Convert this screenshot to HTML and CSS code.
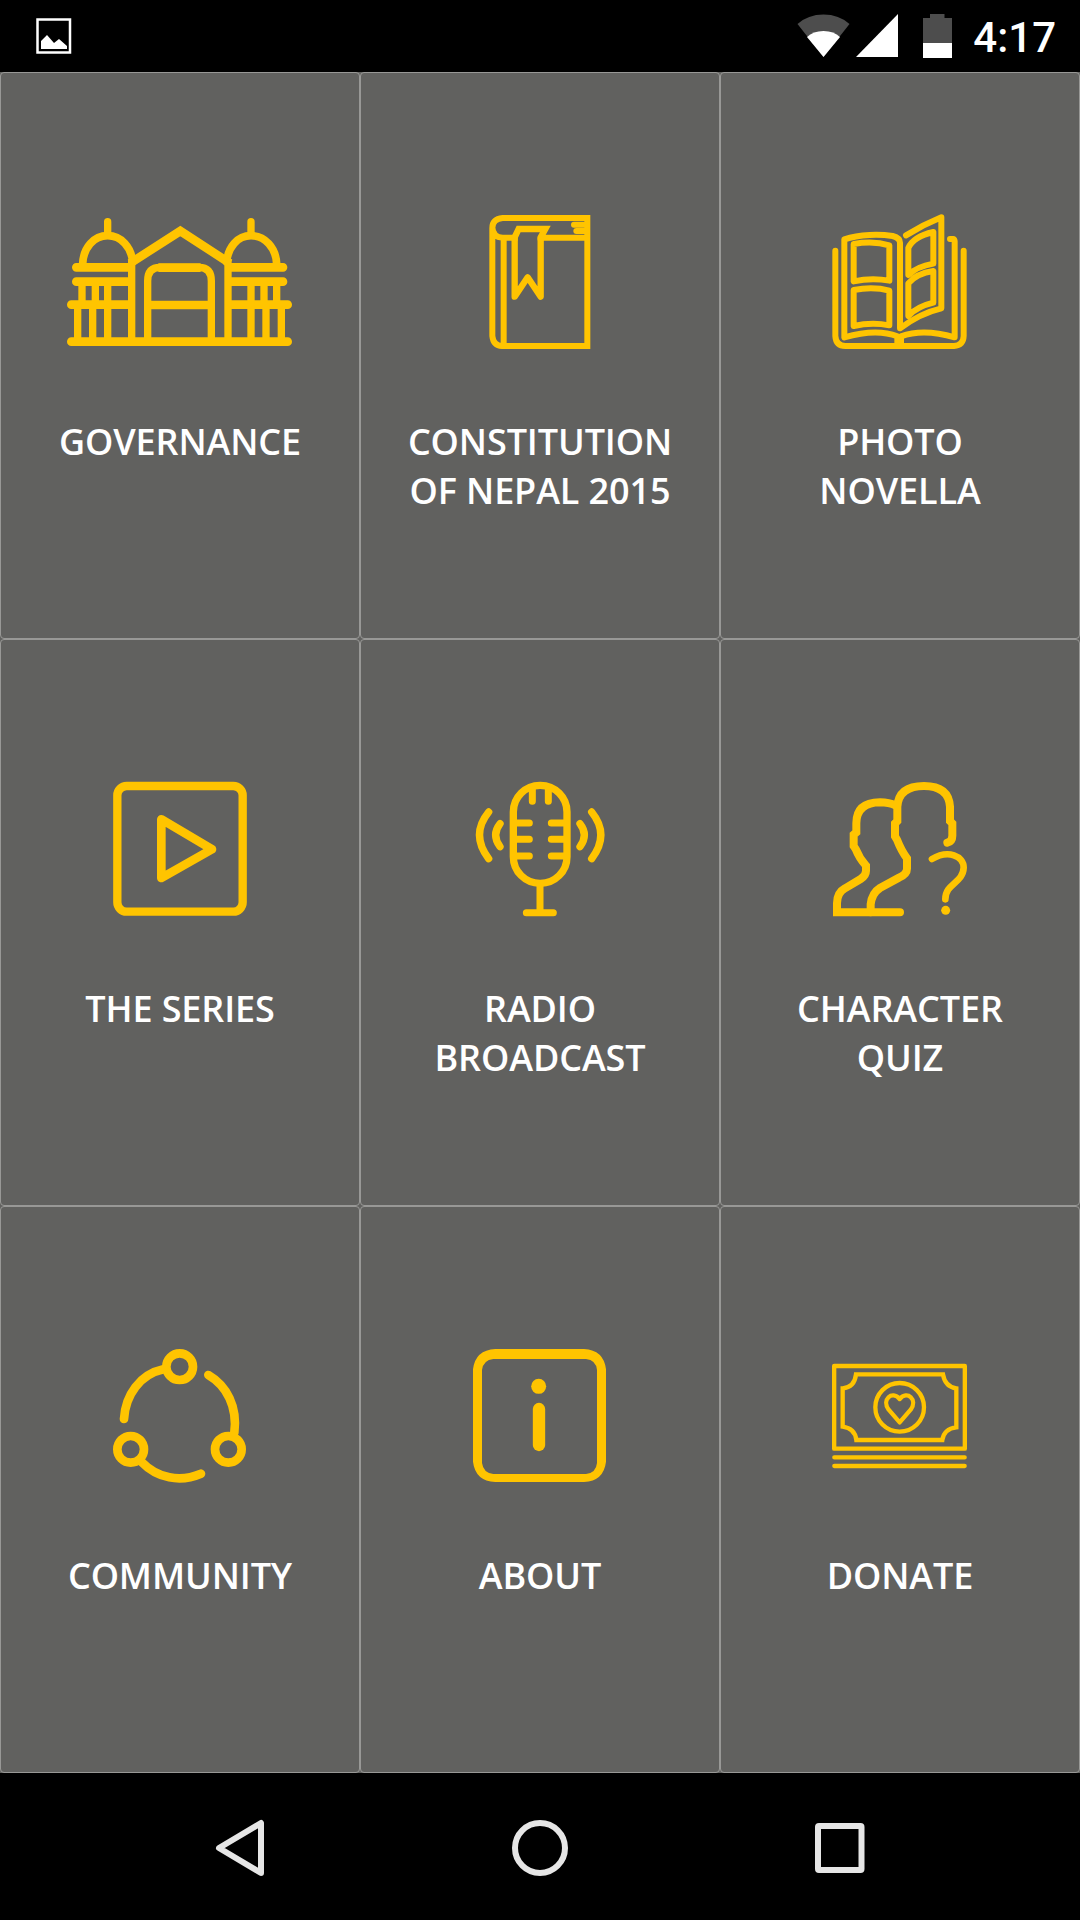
FILE: index.html
```
<!DOCTYPE html>
<html lang="en">
<head>
  <meta charset="UTF-8" />
  <meta name="viewport" content="width=device-width, initial-scale=1.0"/>
  <title>Home</title>
  <link rel="stylesheet" href="styles.css">
</head>
<body>
  <header class="status-bar">
    <svg class="status-photo" viewBox="0 0 36 36">
      <rect x="1.500" y="1.500" width="32.500" height="33" fill="none" stroke="#fff" stroke-width="2.500"/>
      <path d="M5 31V23L11 17L18 25L23 21L31 28V31Z" fill="#fff"/>
    </svg>
    <div class="status-icons">
      <svg width="155" height="72" viewBox="797 0 155 72">
        <path d="M823.500 57L797.500 24Q808 14.500 823.500 14.500T849.500 24Z" fill="#4d4d4d"/>
        <path d="M823.500 57L807 37Q813 31 823.500 31T840 37Z" fill="#fff"/>
        <path d="M856 57H898V14Z" fill="#fff"/>
        <path d="M930 14H944.500V18H952V43H923V18H930Z" fill="#4d4d4d"/>
        <path d="M923 43H952V58H923Z" fill="#fff"/>
      </svg>
      <span class="clock">4:17</span>
    </div>
  </header>

  <main class="menu">
    <a class="tile">
      <svg class="icon icon-wide" viewBox="0 0 780 480" stroke-width="22">
        <path d="M173 65V105M603 65V105"/>
        <path stroke-width="23" d="M98 192C100 142 132 107 173 107S244 142 248 186M680 192C678 142 644 107 603 107S534 142 530 186"/>
        <path stroke-width="26" d="M79 202H236M544 202H699M79 245H236M544 245H699M64 314H240M540 314H713M64 425H713M300 315H480"/>
        <path class="butt" stroke-width="26" stroke-linejoin="miter" d="M240 190L391 93L540 190"/>
        <path class="butt" d="M96 245V314M136 245V314M173 245V425M603 245V425M642 245V314M680 245V314M83 314V425M128 314V425M648 314V425M694 314V425M245 178V425M534 178V425"/>
        <path class="butt" d="M293 425V243Q293 202 330 202H447Q484 202 484 243V425"/>
        <path stroke-width="26" class="butt" d="M325 203H452"/>
      </svg>
      <span class="label">GOVERNANCE</span>
    </a>
    <a class="tile">
      <svg class="icon" viewBox="-30 0 480 480" stroke-width="18">
        <path class="butt" stroke-linejoin="miter" d="M352 54H98Q67 57 67 84V408Q70 437 96 438H352V45M67 82Q69 112 98 113H132M218 113H352M101 113V438"/>
        <path stroke-width="19" d="M134 116V290L173 232L212 290V116"/>
        <path stroke-width="19" stroke-linejoin="miter" d="M134 116V112L146 87H226L212 112V116"/>
        <path d="M312 74H350M319 93H350"/>
      </svg>
      <span class="label">CONSTITUTION<br>OF NEPAL 2015</span>
    </a>
    <a class="tile">
      <svg class="icon" viewBox="0 0 480 480" stroke-width="18">
        <path d="M46 152V408Q48 438 76 438H402Q430 436 431 408V152M390 117H400Q404 119 404 124V412Q310 384 243 409V436M232 436V409Q170 384 73 412V118C120 102 180 102 218 108Q240 114 240 128V385Q300 340 364 325V52Q310 74 258 106"/>
        <path d="M101 132Q160 122 208 136V242Q155 232 101 244ZM101 270Q160 259 208 272V376Q155 366 101 378Z"/>
        <path d="M265 144Q280 110 340 96V191Q290 200 265 225ZM265 250Q290 220 340 213V308Q290 320 265 348Z"/>
      </svg>
      <span class="label">PHOTO<br>NOVELLA</span>
    </a>
    <a class="tile">
      <svg class="icon" viewBox="0 -9 480 480" stroke-width="26">
        <rect x="52" y="48" width="376" height="377" rx="28" stroke-width="25"/>
        <path d="M184 148L336 238L184 324Z"/>
      </svg>
      <span class="label">THE SERIES</span>
    </a>
    <a class="tile">
      <svg class="icon" viewBox="0 -9 480 480" stroke-width="21">
        <rect x="160" y="46" width="161" height="294" rx="80" stroke-width="22"/>
        <path d="M217 58V94M265 58V94M166 159H208M166 208H208M166 258H208M274 159H316M274 208H316M274 258H316M240 342V426M199 428H280"/>
        <path stroke-width="22" d="M86 126Q31 194 86 266M120 161Q94 194 120 230M395 126Q450 194 395 266M360 161Q386 194 360 230"/>
      </svg>
      <span class="label">RADIO<br>BROADCAST</span>
    </a>
    <a class="tile">
      <svg class="icon" viewBox="0 -9 480 480" stroke-width="24">
        <path d="M240 427H51V400Q51 368 75 355L122 327Q138 317 138 302V287Q118 265 107 237L101 228V194L109 187V160Q109 98 180 97Q208 98 226 106" stroke-linejoin="miter"/>
        <path d="M152 427V403Q156 369 180 354L237 323Q261 312 261 296V265Q244 242 231 209L225 199V160L232 153V110Q236 48 312 48Q386 48 390 110V153L397 160V197Q397 214 382 218" stroke-linejoin="miter"/>
        <path stroke-width="20" d="M336 267C385 238 431 258 431 293C429 340 376 340 376 388"/>
        <circle class="solid" cx="377" cy="421" r="13.500"/>
      </svg>
      <span class="label">CHARACTER<br>QUIZ</span>
    </a>
    <a class="tile">
      <svg class="icon" viewBox="0 -18 480 480" stroke-width="26">
        <circle cx="239" cy="80" r="40"/>
        <circle cx="92" cy="328" r="40"/>
        <circle cx="385" cy="328" r="40"/>
        <path d="M72 237C76 165 120 103 190 88M325 105C380 137 413 200 403 278M124 365C172 415 240 428 303 401"/>
      </svg>
      <span class="label">COMMUNITY</span>
    </a>
    <a class="tile">
      <svg class="icon" viewBox="0 -18 480 480">
        <path class="solid" fill-rule="evenodd" d="M106 27H372Q431 30 438 88V365Q431 423 372 426H106Q46 423 39 365V88Q46 30 106 27ZM100 57Q70 60 66 90V369Q70 399 100 402H378Q408 399 411 369V90Q408 60 378 57Z"/>
        <circle class="solid" cx="236" cy="139" r="22.500"/>
        <path stroke-width="37" d="M237 207V315"/>
      </svg>
      <span class="label">ABOUT</span>
    </a>
    <a class="tile">
      <svg class="icon" viewBox="0 -18 480 480" stroke-width="13">
        <rect x="42.500" y="78" width="392" height="248"/>
        <path d="M43 352H434M43 378H434"/>
        <path stroke-linejoin="miter" d="M108 103H369Q375 140 409 145V262Q372 266 367 300H109Q105 265 68 260V145Q104 142 108 103Z"/>
        <circle cx="239" cy="202" r="73"/>
        <path d="M239 247L206 209C184 179 216 150 239 177C262 150 294 179 272 209Z"/>
      </svg>
      <span class="label">DONATE</span>
    </a>
  </main>

  <nav class="nav-bar">
    <a class="nav-button">
      <svg width="60" height="60" viewBox="0 0 60 60"><path d="M51 5V55L9 30Z"/></svg>
    </a>
    <a class="nav-button">
      <svg width="60" height="60" viewBox="0 0 60 60"><circle cx="30" cy="30" r="25"/></svg>
    </a>
    <a class="nav-button">
      <svg width="60" height="60" viewBox="0 0 60 60"><rect x="8" y="8" width="43.500" height="44" rx="1"/></svg>
    </a>
  </nav>
</body>
</html>
```
FILE: styles.css
```
* {
  box-sizing: border-box;
}
body {
  margin: 0;
  width: 1080px;
  height: 1920px;
  background: #000;
  color: #fff;
  font-family: "Open Sans", sans-serif;
  overflow: hidden;
}
.status-bar {
  display: flex;
  justify-content: space-between;
  align-items: center;
  height: 72px;
  padding: 0 24px 0 36px;
}
.status-photo {
  width: 36px;
  height: 36px;
}
.status-icons {
  display: flex;
  align-items: center;
  gap: 21px;
}
.clock {
  font-family: Roboto, sans-serif;
  font-size: 42px;
  font-weight: 500;
  line-height: 72px;
  padding-top: 4px;
}

/* menu */
.menu {
  display: grid;
  grid-template-columns: repeat(3, 360px);
  grid-auto-rows: 567px;
  background: #61615f;
}
.tile {
  display: flex;
  flex-direction: column;
  align-items: center;
  padding-top: 127px;
  background: #61615f;
  border: 1px solid #989896;
  border-radius: 4px;
}
.icon {
  width: 160px;
  height: 160px;
  margin-bottom: 57px;
  fill: none;
  stroke: #ffc400;
  stroke-linecap: round;
  stroke-linejoin: round;
}
.icon-wide {
  width: 260px;
}
.butt {
  stroke-linecap: butt;
}
.solid {
  fill: #ffc400;
  stroke: none;
}
.label {
  font-size: 36px;
  font-weight: 600;
  line-height: 49px;
  letter-spacing: -0.1px;
  text-align: center;
}

/* android buttons */
.nav-bar {
  display: flex;
  justify-content: center;
  height: 147px;
  padding-top: 3px;
}
.nav-button {
  display: flex;
  justify-content: center;
  align-items: center;
  width: 300px;
}
.nav-button svg {
  fill: none;
  stroke: #e6e6e6;
  stroke-width: 6;
  stroke-linejoin: round;
}
```
